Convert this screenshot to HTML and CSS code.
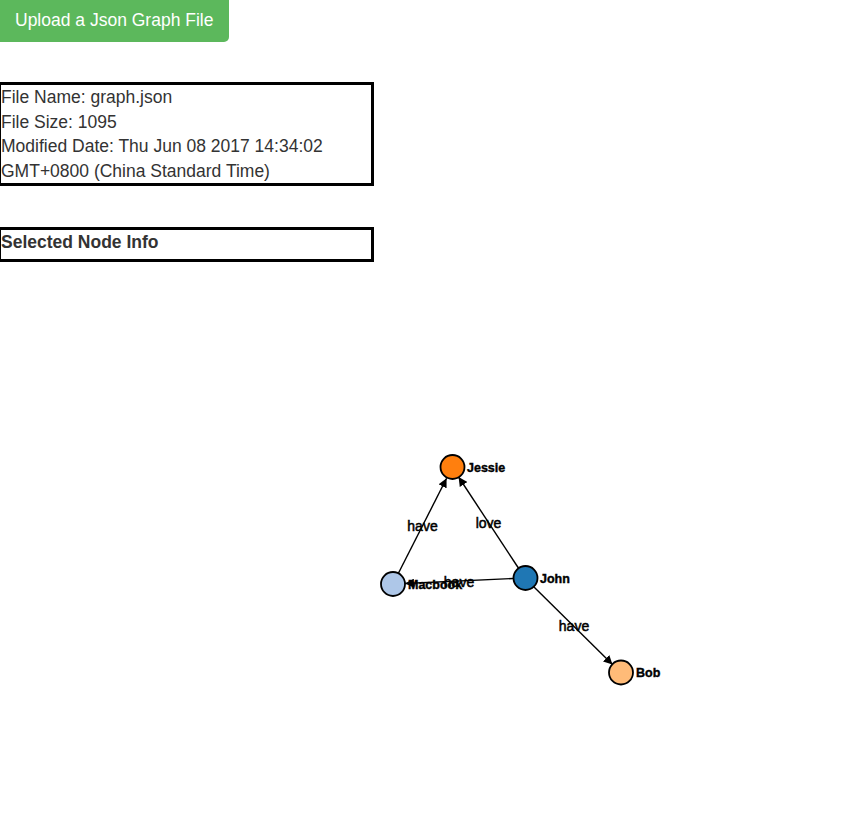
FILE: index.html
```html
<!DOCTYPE html>
<html>
<head>
<meta charset="utf-8">
<title>Json Graph</title>
<link rel="stylesheet" href="styles.css">
</head>
<body>
<button class="upload-btn">Upload a Json Graph File</button>
<div class="info-box file-info">
  <div>File Name: graph.json</div>
  <div>File Size: 1095</div>
  <div>Modified Date: Thu Jun 08 2017 14:34:02 GMT+0800 (China Standard Time)</div>
</div>
<div class="info-box node-info">
  <div class="node-title">Selected Node Info</div>
</div>
<svg class="graph" width="848" height="550" viewBox="0 270 848 550">
  <defs>
    <marker id="arrow" viewBox="0 -5 10 10" refX="10" refY="0" markerWidth="9" markerHeight="9" orient="auto" markerUnits="userSpaceOnUse">
      <path d="M0,-5L10,0L0,5Z" fill="#000"/>
    </marker>
  </defs>
  <g class="links">
    <line x1="398.4" y1="573.3" x2="446.6" y2="478.3" marker-end="url(#arrow)"/>
    <line x1="518.4" y1="568.0" x2="458.6" y2="477.0" marker-end="url(#arrow)"/>
    <line x1="513.0" y1="578.5" x2="405.0" y2="583.5" marker-end="url(#arrow)"/>
    <line x1="533.5" y1="586.4" x2="612.5" y2="664.6" marker-end="url(#arrow)"/>
  </g>
  <g class="nodes">
    <circle cx="452.5" cy="467" r="12" fill="#ff7f0e"/>
    <circle cx="393" cy="584" r="12" fill="#aec7e8"/>
    <circle cx="525.5" cy="578" r="12" fill="#1f77b4"/>
    <circle cx="621" cy="672.5" r="12" fill="#ffbb78"/>
  </g>
  <g class="node-labels">
    <text x="467" y="472">Jessie</text>
    <text x="408" y="589">Macbook</text>
    <text x="540" y="583">John</text>
    <text x="636" y="677">Bob</text>
  </g>
  <g class="edge-labels">
    <text x="422.5" y="531">have</text>
    <text x="488.5" y="528">love</text>
    <text x="459" y="587">have</text>
    <text x="574" y="631">have</text>
  </g>
</svg>
</body>
</html>
```

FILE: styles.css
```css
html, body {
  margin: 0;
  padding: 0;
  background: #fff;
  overflow: hidden;
}
body {
  font-family: "Liberation Sans", Arial, Helvetica, sans-serif;
  font-size: 17.5px;
  color: #333;
}
.upload-btn {
  display: block;
  margin: -2px 0 0 -1px;
  padding: 10px 16px;
  font-family: "Liberation Sans", Arial, sans-serif;
  font-size: 17.5px;
  line-height: 24px;
  color: #fff;
  background: #5cb85c;
  border: none;
  border-radius: 0 0 5px 0;
  cursor: pointer;
}
.info-box {
  width: 370px;
  margin-left: -2px;
  border: 3px solid #000;
}
.file-info {
  margin-top: 40px;
  line-height: 24.5px;
}
.node-info {
  margin-top: 41px;
  padding-bottom: 5px;
  line-height: 24px;
}
.node-title {
  font-weight: bold;
}
.graph {
  display: block;
  margin-top: 8px;
}
.links line {
  stroke: #000;
  stroke-width: 1.4;
}
.nodes circle {
  stroke: #000;
  stroke-width: 1.8;
}
.node-labels text {
  font-family: "Liberation Sans", Arial, sans-serif;
  font-size: 12.5px;
  font-weight: bold;
  fill: #000;
  stroke: #000;
  stroke-width: 0.4;
}
.edge-labels text {
  font-family: "Liberation Sans", Arial, sans-serif;
  font-size: 14px;
  fill: #000;
  stroke: #000;
  stroke-width: 0.5;
  text-anchor: middle;
}
```
